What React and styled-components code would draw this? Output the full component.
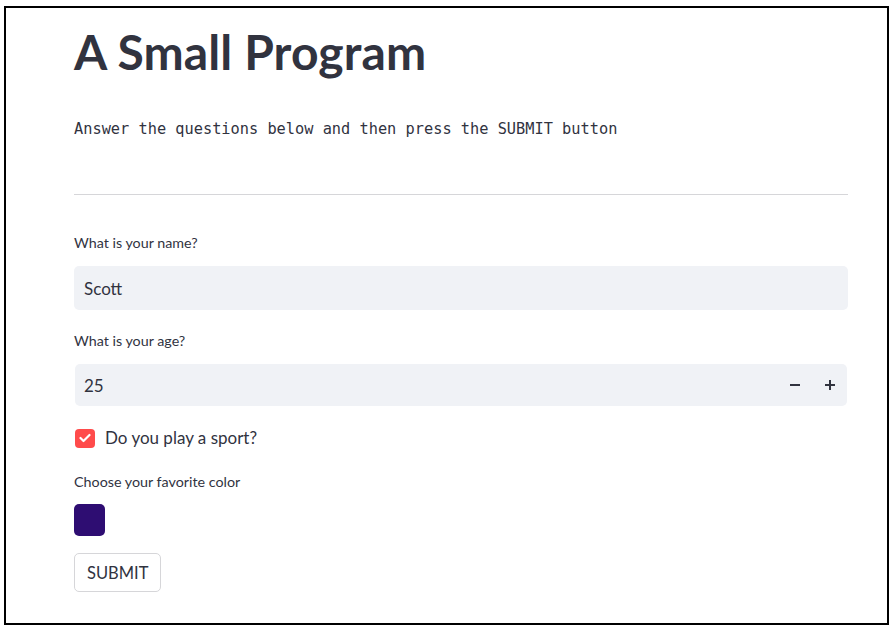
import React, { useState } from 'react';
import styled, { createGlobalStyle } from 'styled-components';

const GlobalStyle = createGlobalStyle`
  html, body {
    margin: 0;
    padding: 0;
    background: #ffffff;
  }
  body {
    font-family: "Source Sans Pro", Lato, "Noto Sans", sans-serif;
    color: #31333f;
  }
`;

const Frame = styled.div`
  box-sizing: border-box;
  width: 885px;
  height: 619px;
  margin: 6px 0 0 4px;
  border: 2px solid #000;
  background: #fff;
  padding: 12px 39px 0 68px;
`;

const Column = styled.div`
  width: 774px;
  display: flex;
  flex-direction: column;
`;

const Title = styled.h1`
  margin: 0;
  font-size: 48px;
  font-weight: 700;
  line-height: 64px;
  letter-spacing: 0.1px;
  color: #31333f;
`;

const Intro = styled.p`
  margin: 35px 0 0;
  font-family: "DejaVu Sans Mono", "Liberation Mono", monospace;
  font-size: 15.3px;
  line-height: 20px;
  color: #31333f;
`;

const Divider = styled.hr`
  margin: 55px 0 0;
  border: none;
  border-top: 1px solid #d6d6d9;
  height: 0;
`;

const Field = styled.div`
  display: flex;
  flex-direction: column;
  margin-top: ${(p) => p.$top || 0}px;
`;

const Label = styled.label`
  font-size: 14.3px;
  line-height: 20px;
  color: #31333f;
  margin-bottom: ${(p) => p.$gap ?? 13}px;
`;

const TextInput = styled.input`
  box-sizing: border-box;
  width: 100%;
  height: 44px;
  border: none;
  outline: none;
  border-radius: 5px;
  background: #f0f2f6;
  padding: 0 10px;
  font-family: inherit;
  font-size: 17px;
  color: #31333f;
`;

const NumberBox = styled.div`
  box-sizing: border-box;
  margin-left: 1px;
  width: 772px;
  height: 42px;
  border-radius: 5px;
  background: #f0f2f6;
  display: flex;
  align-items: center;
`;

const NumberInput = styled.input`
  flex: 1;
  min-width: 0;
  height: 100%;
  border: none;
  outline: none;
  background: transparent;
  padding: 0 9px;
  font-family: inherit;
  font-size: 17px;
  color: #31333f;
`;

const StepButton = styled.button`
  width: 35px;
  height: 100%;
  border: none;
  background: transparent;
  display: flex;
  align-items: center;
  justify-content: center;
  padding: 0;
  cursor: pointer;
  color: #31333f;
`;

const CheckRow = styled.label`
  display: flex;
  align-items: center;
  gap: 10px;
  margin-top: 20px;
  margin-left: 1px;
  font-size: 17px;
  line-height: 24px;
  color: #31333f;
  cursor: pointer;
`;

const CheckBox = styled.span`
  width: 20px;
  height: 19px;
  border-radius: 4px;
  background: ${(p) => (p.$checked ? '#ff4b4b' : '#fff')};
  border: ${(p) => (p.$checked ? 'none' : '1px solid #ccc')};
  display: flex;
  align-items: center;
  justify-content: center;
`;

const Swatch = styled.div`
  width: 31px;
  height: 32px;
  border-radius: 5px;
  background: ${(p) => p.$color};
`;

const SubmitButton = styled.button`
  align-self: flex-start;
  margin-top: 17px;
  box-sizing: border-box;
  height: 39px;
  padding: 0 12px;
  border: 1px solid #d6d6d9;
  border-radius: 5px;
  background: #fff;
  font-family: inherit;
  font-size: 16.5px;
  color: #31333f;
  cursor: pointer;
`;

export default function App() {
  const [name, setName] = useState('Scott');
  const [age, setAge] = useState(25);
  const [sport, setSport] = useState(true);

  return (
    <>
      <GlobalStyle />
      <Frame>
        <Column>
          <Title>A Small Program</Title>
          <Intro>Answer the questions below and then press the SUBMIT button</Intro>
          <Divider />

          <Field $top={38}>
            <Label>What is your name?</Label>
            <TextInput value={name} onChange={(e) => setName(e.target.value)} />
          </Field>

          <Field $top={21}>
            <Label>What is your age?</Label>
            <NumberBox>
              <NumberInput value={age} onChange={(e) => setAge(e.target.value)} />
              <StepButton onClick={() => setAge(Number(age) - 1)}>
                <svg width="10" height="10" viewBox="0 0 10 10">
                  <rect x="0" y="4" width="10" height="2" fill="#31333f" />
                </svg>
              </StepButton>
              <StepButton onClick={() => setAge(Number(age) + 1)}>
                <svg width="10" height="10" viewBox="0 0 10 10">
                  <rect x="0" y="4" width="10" height="2" fill="#31333f" />
                  <rect x="4" y="0" width="2" height="10" fill="#31333f" />
                </svg>
              </StepButton>
            </NumberBox>
          </Field>

          <CheckRow onClick={() => setSport(!sport)}>
            <CheckBox $checked={sport}>
              {sport && (
                <svg width="12" height="10" viewBox="0 0 12 10">
                  <path d="M1.5 5 L4.5 8 L10.5 2" stroke="#fff" strokeWidth="2.2" fill="none" strokeLinecap="round" strokeLinejoin="round" />
                </svg>
              )}
            </CheckBox>
            Do you play a sport?
          </CheckRow>

          <Field $top={22}>
            <Label $gap={12}>Choose your favorite color</Label>
            <Swatch $color="#2e0d72" />
          </Field>

          <SubmitButton>SUBMIT</SubmitButton>
        </Column>
      </Frame>
    </>
  );
}
